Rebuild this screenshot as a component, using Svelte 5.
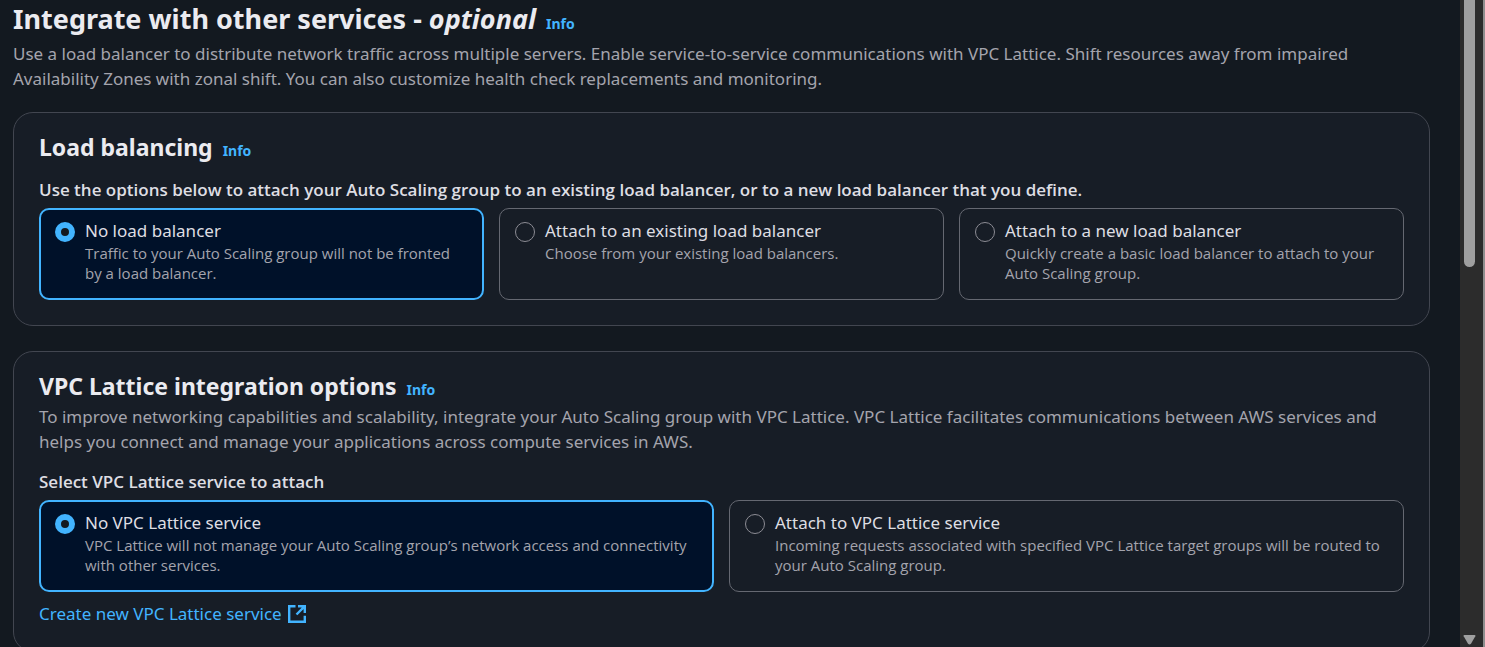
<script>
  let balancer = $state('none');
  let lattice = $state('none');

  const balancerOptions = [
    { value: 'none', label: 'No load balancer', text: 'Traffic to your Auto Scaling group will not be fronted by a load balancer.' },
    { value: 'existing', label: 'Attach to an existing load balancer', text: 'Choose from your existing load balancers.' },
    { value: 'new', label: 'Attach to a new load balancer', text: 'Quickly create a basic load balancer to attach to your Auto Scaling group.' }
  ];
  const latticeOptions = [
    { value: 'none', label: 'No VPC Lattice service', text: 'VPC Lattice will not manage your Auto Scaling group’s network access and connectivity with other services.' },
    { value: 'attach', label: 'Attach to VPC Lattice service', text: 'Incoming requests associated with specified VPC Lattice target groups will be routed to your Auto Scaling group.' }
  ];
</script>

<div class="page">
  <main>
    <header>
      <h1>Integrate with other services - <em>optional</em></h1>
      <a class="info" href="#info">Info</a>
    </header>
    <p class="lead">
      Use a load balancer to distribute network traffic across multiple servers. Enable service-to-service communications with VPC Lattice. Shift resources away from impaired Availability Zones with zonal shift. You can also customize health check replacements and monitoring.
    </p>

    <section class="card">
      <header>
        <h2>Load balancing</h2>
        <a class="info" href="#load-info">Info</a>
      </header>
      <fieldset>
        <legend>Use the options below to attach your Auto Scaling group to an existing load balancer, or to a new load balancer that you define.</legend>
        <div class="tiles three">
          {#each balancerOptions as option}
            <label class="tile" class:selected={balancer === option.value}>
              <input type="radio" name="balancer" value={option.value} bind:group={balancer} />
              <span class="copy">
                <span class="name">{option.label}</span>
                <span class="text">{option.text}</span>
              </span>
            </label>
          {/each}
        </div>
      </fieldset>
    </section>

    <section class="card">
      <header>
        <h2>VPC Lattice integration options</h2>
        <a class="info" href="#lattice-info">Info</a>
      </header>
      <p class="about">
        To improve networking capabilities and scalability, integrate your Auto Scaling group with VPC Lattice. VPC Lattice facilitates communications between AWS services and helps you connect and manage your applications across compute services in AWS.
      </p>
      <fieldset>
        <legend>Select VPC Lattice service to attach</legend>
        <div class="tiles two">
          {#each latticeOptions as option}
            <label class="tile" class:selected={lattice === option.value}>
              <input type="radio" name="lattice" value={option.value} bind:group={lattice} />
              <span class="copy">
                <span class="name">{option.label}</span>
                <span class="text">{option.text}</span>
              </span>
            </label>
          {/each}
        </div>
      </fieldset>
      <a class="create" href="#create">
        Create new VPC Lattice service
        <svg viewBox="0 0 18 18" width="18" height="18" fill="none" stroke="currentColor" stroke-width="2.4" aria-hidden="true">
          <path d="M7.500 1.200H1.200v15.600h15.600v-6M10 1.200h6.800v6.800M16.800 1.200L8.500 9.500" />
        </svg>
      </a>
    </section>
  </main>

  <div class="scrollbar" aria-hidden="true">
    <div class="thumb"></div>
    <svg viewBox="0 0 14 12" width="14" height="12"><path d="M1.500 1h10q1.500 0 .8 1.300L8 9.800q-1.500 1.400-3 0L.7 2.300Q0 1 1.500 1z" fill="#9f9f9f" /></svg>
  </div>
</div>

<style>
  :global(body) {
    margin: 0;
    background: #131920;
  }
  .page {
    display: grid;
    grid-template-columns: 1fr 25px;
    height: 100vh;
    overflow: hidden;
    background: #131920;
    color: #ebebf0;
    font: 17px/25px "Noto Sans", "Open Sans", sans-serif;
  }
  main {
    padding: 4px 30px 0 13px;
    overflow: hidden;
  }
  header {
    display: flex;
    align-items: baseline;
    gap: 10px;
  }
  h1, h2, p, fieldset, legend {
    margin: 0;
    padding: 0;
    border: 0;
  }
  h1 {
    font-size: 27px;
    line-height: 30px;
    font-weight: 700;
  }
  h2 {
    font-size: 23px;
    line-height: 30px;
    font-weight: 700;
  }
  p {
    color: #a4a4ad;
  }
  .lead {
    margin: 7px 0 21px;
  }
  .about {
    margin-top: 3px;
  }
  a {
    color: #42b4ff;
    text-decoration: none;
  }
  .info {
    font-size: 14px;
    line-height: 20px;
    font-weight: 700;
  }
  .card {
    margin-bottom: 25px;
    padding: 19px 25px 25px;
    border: 1px solid #424650;
    border-radius: 20px;
    background: #171d26;
  }
  fieldset {
    min-width: 0;
    margin-top: 15px;
  }
  legend {
    padding-bottom: 6px;
    color: #dedee3;
    font-family: "Open Sans", "Noto Sans", sans-serif;
    font-weight: 600;
  }
  .tiles {
    display: grid;
    gap: 15px;
  }
  .three {
    grid-template-columns: repeat(3, 1fr);
  }
  .two {
    grid-template-columns: repeat(2, 1fr);
  }
  .tile {
    display: flex;
    gap: 10px;
    padding: 9px 15px 16px;
    border: 1px solid #656871;
    border-radius: 10px;
  }
  .tile.selected {
    padding: 8px 14px 15px;
    border: 2px solid #42b4ff;
    background: #001129;
  }
  input {
    appearance: none;
    box-sizing: border-box;
    flex: none;
    width: 20px;
    height: 20px;
    margin: 4px 0 0;
    border: 1px solid #8c8c94;
    border-radius: 50%;
  }
  input:checked {
    border: 6px solid #42b4ff;
    background: #131920;
  }
  .name, .text {
    display: block;
  }
  .name {
    color: #dedee3;
  }
  .text {
    color: #a4a4ad;
    font-family: "Open Sans", "Noto Sans", sans-serif;
    font-size: 15px;
    line-height: 20px;
  }
  .create {
    display: inline-flex;
    align-items: center;
    gap: 6px;
    margin-top: 9px;
  }
  .scrollbar {
    display: flex;
    flex-direction: column;
    justify-content: space-between;
    padding: 0 0 1px 3px;
    border-right: 2px solid #8e8e8e;
    background: #2c2c2c;
  }
  .thumb {
    width: 11px;
    height: 41.300%;
    margin-left: 1px;
    border-radius: 0 0 6px 6px;
    background: #9f9f9f;
  }
</style>
